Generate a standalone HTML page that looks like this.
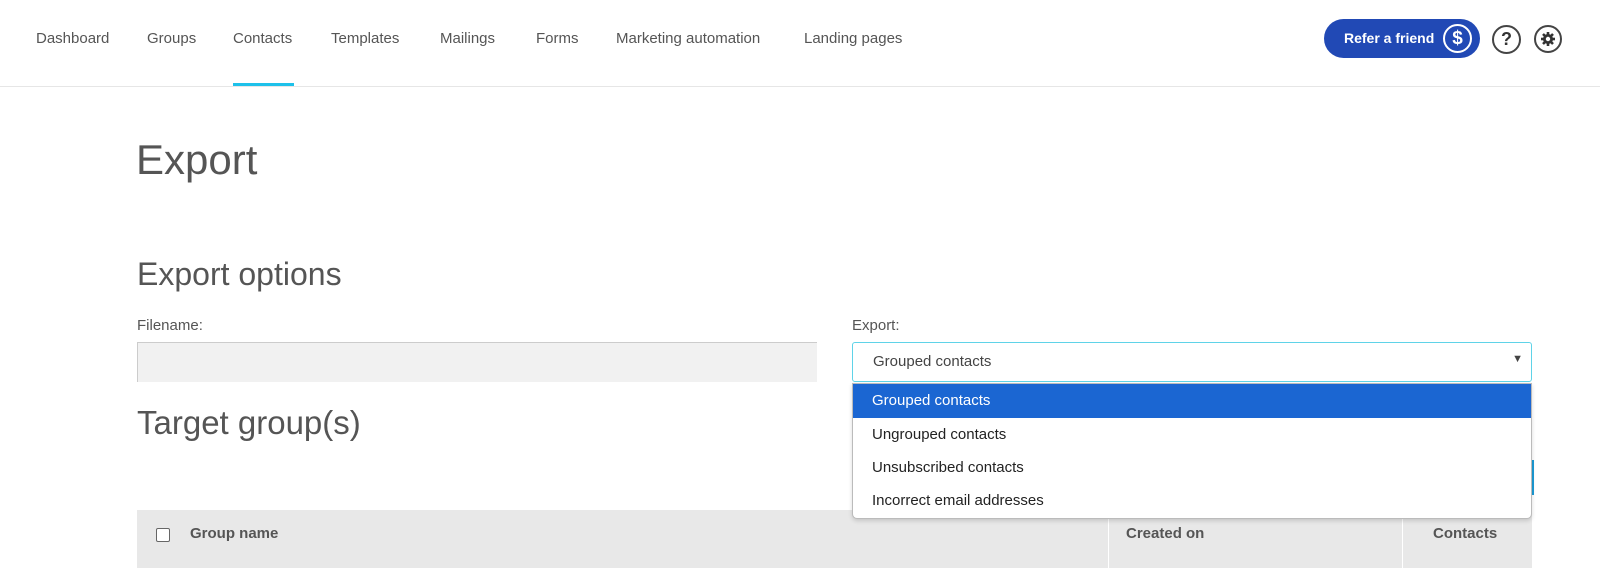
<!DOCTYPE html><html><head><meta charset="utf-8"><style>
*{box-sizing:border-box;margin:0;padding:0}
body{width:1600px;height:568px;overflow:hidden;background:#fff;font-family:"Liberation Sans",Arial,sans-serif;color:#555;position:relative}
.a{position:absolute;white-space:nowrap}
.nav{font-size:15px;color:#555;top:30px}
</style></head><body>
<div class="a" style="left:0;top:86px;width:1600px;height:1px;background:#e6e6e6"></div>
<div class="a nav" style="left:36px">Dashboard</div>
<div class="a nav" style="left:147px">Groups</div>
<div class="a nav" style="left:233px">Contacts</div>
<div class="a nav" style="left:331px">Templates</div>
<div class="a nav" style="left:440px">Mailings</div>
<div class="a nav" style="left:536px">Forms</div>
<div class="a nav" style="left:616px">Marketing automation</div>
<div class="a nav" style="left:804px">Landing pages</div>
<div class="a" style="left:233px;top:83px;width:61px;height:3px;background:#1dc1ea"></div>
<div class="a" style="left:1324px;top:19px;width:156px;height:39px;border-radius:20px;background:#2149b5;color:#fff;font-weight:bold;font-size:14px;padding:11px 0 0 20px">Refer a friend</div>
<div class="a" style="left:1443px;top:24px;width:29px;height:29px;border-radius:50%;border:2px solid #fff;color:#fff;font-weight:bold;font-size:19px;text-align:center;line-height:25px">$</div>
<div class="a" style="left:1492px;top:25px;width:29px;height:29px;border-radius:50%;border:2px solid #444;color:#333;font-weight:bold;font-size:18px;text-align:center;line-height:25px">?</div>
<div class="a" style="left:1534px;top:25px;width:28px;height:28px;border-radius:50%;border:2px solid #444"></div>
<svg class="a" style="left:1540px;top:31px" width="16" height="16" viewBox="0 0 16 16"><g fill="#333"><circle cx="8" cy="8" r="5"/><g stroke="#333" stroke-width="2.6"><line x1="8" y1="1" x2="8" y2="15"/><line x1="1" y1="8" x2="15" y2="8"/><line x1="3" y1="3" x2="13" y2="13"/><line x1="13" y1="3" x2="3" y2="13"/></g></g><circle cx="8" cy="8" r="2.2" fill="#fff"/></svg>
<div class="a" style="left:136px;top:136px;font-size:42px;color:#555;font-weight:300">Export</div>
<div class="a" style="left:137px;top:256px;font-size:32px;color:#555">Export options</div>
<div class="a" style="left:137px;top:317px;font-size:15px">Filename:</div>
<div class="a" style="left:137px;top:342px;width:680px;height:40px;background:#f1f1f1;border-top:1px solid #ccc;border-left:1px solid #ccc"></div>
<div class="a" style="left:852px;top:317px;font-size:15px">Export:</div>
<div class="a" style="left:852px;top:342px;width:680px;height:40px;border:1px solid #5fd3e8;border-radius:3px;font-size:15px;padding:10px 0 0 20px;color:#444">Grouped contacts<span style="position:absolute;right:8px;top:10px;font-size:11px">▼</span></div>
<div class="a" style="left:137px;top:404px;font-size:33px;color:#555">Target group(s)</div>
<div class="a" style="left:1500px;top:460px;width:34px;height:35px;background:#1b9bd6"></div>
<div class="a" style="left:137px;top:510px;width:1395px;height:58px;background:#e8e8e8"></div>
<div class="a" style="left:1108px;top:510px;width:1px;height:58px;background:#fff"></div>
<div class="a" style="left:1402px;top:510px;width:1px;height:58px;background:#fff"></div>
<div class="a" style="left:156px;top:528px;width:14px;height:14px;border:1.5px solid #666;border-radius:2px;background:#fff"></div>
<div class="a" style="left:190px;top:525px;font-size:15px;font-weight:bold;color:#555">Group name</div>
<div class="a" style="left:1126px;top:525px;font-size:15px;font-weight:bold;color:#555">Created on</div>
<div class="a" style="left:1433px;top:525px;font-size:15px;font-weight:bold;color:#555">Contacts</div>
<div class="a" style="left:852px;top:383px;width:680px;height:136px;background:#fff;border:1px solid #bbb;border-radius:0 0 5px 5px;box-shadow:0 2px 4px rgba(0,0,0,.15);font-size:15px;color:#222;overflow:hidden">
<div style="height:34px;background:#1b66d2;color:#fff;padding:8px 0 0 19px">Grouped contacts</div>
<div style="height:34px;padding:8px 0 0 19px">Ungrouped contacts</div>
<div style="height:34px;padding:7px 0 0 19px">Unsubscribed contacts</div>
<div style="height:34px;padding:6px 0 0 19px">Incorrect email addresses</div>
</div>
</body></html>
